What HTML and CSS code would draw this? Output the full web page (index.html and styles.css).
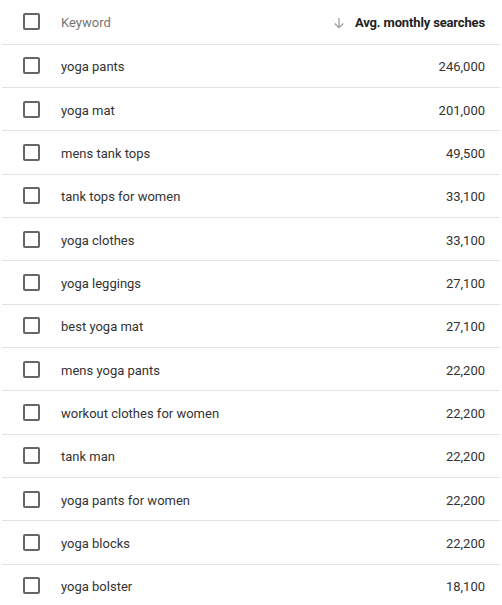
FILE: index.html
```html
<!DOCTYPE html>
<html>
<head>
<meta charset="utf-8">
<link rel="stylesheet" href="styles.css">
</head>
<body>
<div class="table">
  <div class="row header">
    <span class="check"></span>
    <span class="kw">Keyword</span>
    <span class="num"><svg class="arrow" width="12" height="12" viewBox="0 0 12 12"><path d="M6 1v9.5M1.8 6.5L6 10.7l4.2-4.2" fill="none" stroke="#9e9e9e" stroke-width="1.3"/></svg>Avg. monthly searches</span>
  </div>
  <div class="row"><span class="check"></span><span class="kw">yoga pants</span><span class="num">246,000</span></div>
  <div class="row"><span class="check"></span><span class="kw">yoga mat</span><span class="num">201,000</span></div>
  <div class="row"><span class="check"></span><span class="kw">mens tank tops</span><span class="num">49,500</span></div>
  <div class="row"><span class="check"></span><span class="kw">tank tops for women</span><span class="num">33,100</span></div>
  <div class="row"><span class="check"></span><span class="kw">yoga clothes</span><span class="num">33,100</span></div>
  <div class="row"><span class="check"></span><span class="kw">yoga leggings</span><span class="num">27,100</span></div>
  <div class="row"><span class="check"></span><span class="kw">best yoga mat</span><span class="num">27,100</span></div>
  <div class="row"><span class="check"></span><span class="kw">mens yoga pants</span><span class="num">22,200</span></div>
  <div class="row"><span class="check"></span><span class="kw">workout clothes for women</span><span class="num">22,200</span></div>
  <div class="row"><span class="check"></span><span class="kw">tank man</span><span class="num">22,200</span></div>
  <div class="row"><span class="check"></span><span class="kw">yoga pants for women</span><span class="num">22,200</span></div>
  <div class="row"><span class="check"></span><span class="kw">yoga blocks</span><span class="num">22,200</span></div>
  <div class="row"><span class="check"></span><span class="kw">yoga bolster</span><span class="num">18,100</span></div>
</div>
</body>
</html>
```
FILE: styles.css
```css
html, body {
  margin: 0;
  padding: 0;
  background: #fff;
}
body {
  font-family: Roboto, "Liberation Sans", sans-serif;
  font-size: 13px;
  color: #333;
  overflow: hidden;
}
.table {
  margin: 0 2px;
}
.row {
  display: flex;
  align-items: center;
  height: 43.33px;
  box-sizing: border-box;
  border-bottom: 1px solid #e3e3e3;
  padding: 0 15px 0 21px;
}
.row.header {
  height: 44.6px;
}
.check {
  width: 17px;
  height: 17px;
  box-sizing: border-box;
  border: 2px solid #666;
  border-radius: 2px;
  flex: none;
}
.kw {
  margin-left: 21px;
  flex: 1;
  padding-top: 2px;
}
.num {
  display: flex;
  align-items: center;
  padding-top: 2px;
}
.header .kw {
  color: #757575;
}
.header .num {
  font-weight: 700;
  color: #222;
  letter-spacing: -0.15px;
}
.arrow {
  margin-right: 10px;
}
```
